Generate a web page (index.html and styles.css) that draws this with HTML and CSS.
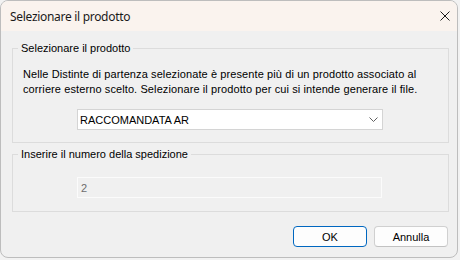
FILE: index.html
```html
<!DOCTYPE html>
<html lang="it">
<head>
  <meta charset="UTF-8"/>
  <title>Selezionare il prodotto</title>
  <link rel="stylesheet" href="styles.css">
</head>
<body>
  <div class="window">
    <div class="titlebar">
      <span class="title">Selezionare il prodotto</span>
      <button class="close" aria-label="Chiudi">
        <svg width="10" height="10" viewBox="0 0 10 10">
          <path d="M0.5 0.5 L9.5 9.5 M9.5 0.5 L0.5 9.5" stroke="#1a1a1a" stroke-width="1" fill="none"/>
        </svg>
      </button>
    </div>

    <div class="content">
      <fieldset class="group group-product">
        <legend>Selezionare il prodotto</legend>
        <p class="info">Nelle Distinte di partenza selezionate è presente più di un prodotto associato al corriere esterno scelto. Selezionare il prodotto per cui si intende generare il file.</p>
        <div class="combo">
          <span>RACCOMANDATA AR</span>
          <svg width="9" height="5" viewBox="0 0 9 5">
            <path d="M0.5 0.5 L4.5 4.5 L8.5 0.5" stroke="#606060" stroke-width="1" fill="none"/>
          </svg>
        </div>
      </fieldset>

      <fieldset class="group group-number">
        <legend>Inserire il numero della spedizione</legend>
        <input class="textbox" type="text" value="2" disabled>
      </fieldset>

      <div class="actions">
        <button class="btn btn-default">OK</button>
        <button class="btn">Annulla</button>
      </div>
    </div>
  </div>
</body>
</html>
```

FILE: styles.css
```css
* {
  box-sizing: border-box;
  margin: 0;
  padding: 0;
}

body {
  background: #f2f2f2;
  font-family: "Liberation Sans", Arial, sans-serif;
  font-size: 11px;
  color: #000;
}

.window {
  width: 458px;
  height: 258px;
  border: 1px solid #bdbdbd;
  border-radius: 8px;
  background: #f0f0f0;
  overflow: hidden;
  display: flex;
  flex-direction: column;
}

.titlebar {
  height: 30px;
  background: #faf3ee;
  display: flex;
  align-items: center;
  justify-content: space-between;
  padding-left: 9px;
}

.title {
  font-family: "Noto Sans", sans-serif;
  font-size: 12px;
  letter-spacing: -0.3px;
  color: #1a1a1a;
}

.close {
  width: 25px;
  height: 30px;
  border: none;
  background: transparent;
  display: flex;
  align-items: center;
  justify-content: center;
}

.content {
  flex: 1;
  padding: 11px 8px 0 11px;
  display: flex;
  flex-direction: column;
}

.group {
  border: 1px solid #dcdcdc;
  min-width: 0;
}

.group legend {
  margin-left: -5px;
  padding: 0 3px;
  line-height: 13px;
}

.group-product {
  padding: 12px 10px 12px 10px;
}

.info {
  line-height: 15px;
  letter-spacing: 0.1px;
}

.combo {
  margin: 12px 0 0 54px;
  width: 306px;
  height: 21px;
  background: #fff;
  border: 1px solid #d4d4d4;
  display: flex;
  align-items: center;
  justify-content: space-between;
  padding: 0 4px 0 2px;
}

.group-number {
  margin-top: 5px;
  padding: 16px 10px 13px 10px;
}

.textbox {
  display: block;
  margin-left: 54px;
  width: 305px;
  height: 21px;
  border: 1px solid #fbfbfb;
  background: #f0f0f0;
  color: #6d6d6d;
  font-family: inherit;
  font-size: 11px;
  padding-left: 3px;
}

.actions {
  margin-top: 14px;
  padding-right: 1px;
  display: flex;
  justify-content: flex-end;
  gap: 7px;
}

.btn {
  width: 74px;
  height: 21px;
  border: 1px solid #d0d0d0;
  border-bottom-color: #c2c2c2;
  border-radius: 4px;
  background: #fdfdfd;
  font-family: inherit;
  font-size: 11px;
  color: #000;
}

.btn-default {
  border: 1px solid #0067c0;
}
```
